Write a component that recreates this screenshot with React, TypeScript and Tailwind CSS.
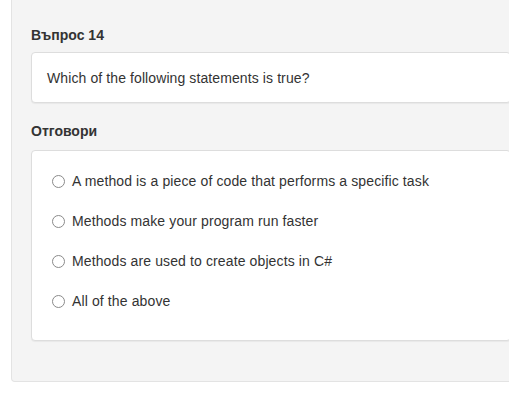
const answers = [
  "A method is a piece of code that performs a specific task",
  "Methods make your program run faster",
  "Methods are used to create objects in C#",
  "All of the above",
];

const App = () => {
  return (
    <div className="min-h-[420px] bg-white font-['Liberation_Sans',Arial,sans-serif] text-[14px] text-[#333] overflow-hidden">
      <div className="ml-[11px] w-[520px] bg-[#f4f4f4] border border-t-0 border-[#e3e3e3] rounded-b-[4px] px-[19px] pt-[26px] pb-[40px]">
        <h4 className="font-bold leading-[18px] mb-[8px]">Въпрос 14</h4>
        <div className="bg-white border border-[#ddd] rounded-[4px] shadow-[0_1px_1px_rgba(0,0,0,0.05)] h-[51px] pl-[15px] pt-[2px] flex items-center tracking-[0.1px]">
          Which of the following statements is true?
        </div>

        <h4 className="font-bold leading-[18px] mt-[19px] mb-[10px]">Отговори</h4>
        <div className="bg-white border border-[#ddd] rounded-[4px] shadow-[0_1px_1px_rgba(0,0,0,0.05)] h-[191px] pl-[20px] pt-[10px] tracking-[0.12px]">
          {answers.map((a) => (
            <label key={a} className="h-[40px] flex items-center gap-[7px]">
              <span className="w-[13px] h-[13px] rounded-full border border-[#8a8a8a] bg-white shrink-0" />
              <span>{a}</span>
            </label>
          ))}
        </div>
      </div>
    </div>
  )
}

export default App
